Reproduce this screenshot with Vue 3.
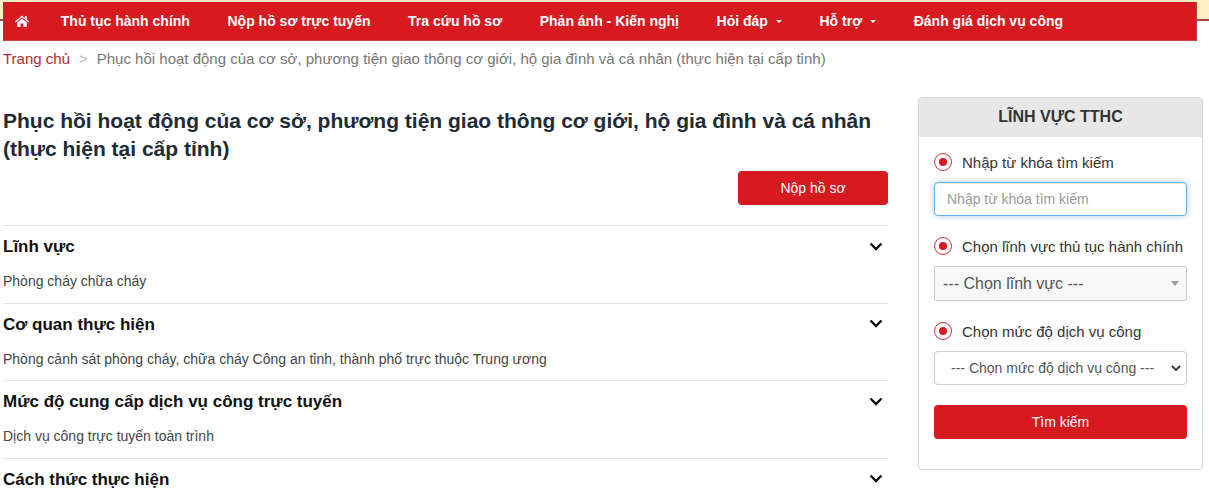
<script setup>
const menu = [
  { label: 'Thủ tục hành chính' },
  { label: 'Nộp hồ sơ trực tuyến' },
  { label: 'Tra cứu hồ sơ' },
  { label: 'Phản ánh - Kiến nghị' },
  { label: 'Hỏi đáp', caret: true },
  { label: 'Hỗ trợ', caret: true },
  { label: 'Đánh giá dịch vụ công' }
]
const title = 'Phục hồi hoạt động của cơ sở, phương tiện giao thông cơ giới, hộ gia đình và cá nhân (thực hiện tại cấp tỉnh)'
const sections = [
  { name: 'Lĩnh vực', text: 'Phòng cháy chữa cháy' },
  { name: 'Cơ quan thực hiện', text: 'Phòng cảnh sát phòng cháy, chữa cháy Công an tỉnh, thành phố trực thuộc Trung ương' },
  { name: 'Mức độ cung cấp dịch vụ công trực tuyến', text: 'Dịch vụ công trực tuyến toàn trình' },
  { name: 'Cách thức thực hiện', text: '' }
]
</script>

<template>
  <div class="page">
    <header class="header">
      <nav class="nav">
        <a class="nav-item home">
          <svg width="14" height="12" viewBox="0 0 14 12"><path fill="#fff" d="M7 0.6 0 6.6l.8.9L7 2.3l6.2 5.2.8-.9-2.3-2V1h-1.8v1.9zM2.2 7.6V12h3.4V8.6h2.8V12h3.4V7.6L7 3.6z"/></svg>
        </a>
        <a v-for="m in menu" :key="m.label" class="nav-item">
          {{ m.label }}<i v-if="m.caret" class="caret"></i>
        </a>
      </nav>
    </header>
    <div class="crumb">
      <a class="crumb-home">Trang chủ</a>
      <span class="crumb-sep">&gt;</span>
      <span>{{ title }}</span>
    </div>
    <div class="main">
      <div class="content">
        <h1 class="title">{{ title }}</h1>
        <div class="submit-row">
          <button class="btn btn-submit">Nộp hồ sơ</button>
        </div>
        <section v-for="s in sections" :key="s.name" class="section">
          <div class="section-head">
            <h3>{{ s.name }}</h3>
            <svg class="chevron" width="14" height="9" viewBox="0 0 14 9"><path d="M1.5 1.5 7 7l5.5-5.5" fill="none" stroke="#111" stroke-width="2.4"/></svg>
          </div>
          <p v-if="s.text">{{ s.text }}</p>
        </section>
      </div>
      <aside class="side">
        <div class="side-head">LĨNH VỰC TTHC</div>
        <div class="side-body">
          <label class="radio-row"><i class="radio"></i>Nhập từ khóa tìm kiếm</label>
          <input class="field field-focus" placeholder="Nhập từ khóa tìm kiếm" />
          <label class="radio-row"><i class="radio"></i>Chọn lĩnh vực thủ tục hành chính</label>
          <div class="field fake-select">
            <span>--- Chọn lĩnh vực ---</span>
            <i class="select-arrow"></i>
          </div>
          <label class="radio-row"><i class="radio"></i>Chọn mức độ dịch vụ công</label>
          <div class="field level-select">
            <span>--- Chọn mức độ dịch vụ công ---</span>
            <svg width="10" height="7" viewBox="0 0 10 7"><path d="M1 1l4 4 4-4" fill="none" stroke="#333" stroke-width="1.8"/></svg>
          </div>
          <button class="btn btn-search">Tìm kiếm</button>
        </div>
      </aside>
    </div>
  </div>
</template>

<style>
html, body {
  margin: 0;
  background: #fff;
}
</style>

<style scoped>
.page {
  width: 1209px;
  height: 492px;
  overflow: hidden;
  font-family: "Liberation Sans", Arial, sans-serif;
  color: #333;
}
.header {
  padding: 2px 12px 0 3px;
  background: linear-gradient(#fdeec4 0, #fdeec4 19px, #a8443c 19px, #a8443c 21px, #fff 21px);
}
.nav {
  display: flex;
  align-items: center;
  height: 39px;
  box-sizing: border-box;
  background: #d71920;
  border-right: 1px solid #b5403f;
  border-bottom: 1px solid #c9453f;
}
.nav-item {
  display: flex;
  align-items: center;
  color: #fff;
  font-size: 14px;
  font-weight: bold;
  padding: 0 18.8px;
  white-space: nowrap;
}
.home {
  padding: 0 13px 0 12px;
}
.caret {
  width: 0;
  height: 0;
  margin-left: 8px;
  border-left: 3.5px solid transparent;
  border-right: 3.5px solid transparent;
  border-top: 3.5px solid #fff;
}
.crumb {
  display: flex;
  align-items: center;
  height: 35px;
  padding-left: 3px;
  font-size: 15px;
  color: #777;
}
.crumb-home {
  color: #b52a34;
}
.crumb-sep {
  margin: 0 9px;
  color: #bbb;
}
.main {
  display: flex;
  align-items: flex-start;
  padding: 21px 0 0 3px;
}
.content {
  width: 885px;
}
.title {
  margin: 0;
  padding-top: 10px;
  font-size: 21px;
  line-height: 28px;
  font-weight: bold;
  color: #212b36;
}
.submit-row {
  display: flex;
  justify-content: flex-end;
  margin-top: 8px;
  padding-bottom: 20px;
}
.btn {
  display: block;
  height: 34px;
  border: 0;
  border-radius: 4px;
  background: #d71920;
  color: #fff;
  font-family: inherit;
  font-size: 14px;
}
.btn-submit {
  width: 150px;
}
.section {
  border-top: 1px solid #e4e4e4;
  height: 77.5px;
  box-sizing: border-box;
}
.section-head {
  display: flex;
  justify-content: space-between;
  align-items: center;
  padding: 11px 5px 0 0;
}
.section-head h3 {
  margin: 0;
  font-size: 17px;
  line-height: 20px;
  font-weight: bold;
  color: #111;
}
.chevron {
  margin-top: -2px;
}
.section p {
  margin: 15px 0 0;
  font-size: 14px;
  line-height: 18px;
  color: #444;
}
.side {
  width: 285px;
  margin-left: 30px;
  border: 1px solid #d5d5d5;
  border-radius: 4px;
  box-sizing: border-box;
  height: 373px;
}
.side-head {
  height: 39px;
  line-height: 38px;
  background: #e7e7e7;
  text-align: center;
  font-size: 16px;
  font-weight: bold;
  color: #333;
}
.side-body {
  padding: 15px 15px 0;
}
.radio-row {
  display: flex;
  align-items: center;
  gap: 10px;
  height: 20px;
  font-size: 15px;
  color: #333;
}
.radio {
  position: relative;
  display: block;
  width: 18px;
  height: 18px;
  border: 1px solid #c8303a;
  border-radius: 50%;
  box-sizing: border-box;
  flex: none;
}
.radio::after {
  content: "";
  position: absolute;
  left: 4px;
  top: 4px;
  width: 8px;
  height: 8px;
  border-radius: 50%;
  background: #d71920;
}
.field {
  display: flex;
  align-items: center;
  width: 253px;
  height: 34px;
  box-sizing: border-box;
  margin: 10px 0 20px;
  border: 1px solid #ccc;
  border-radius: 4px;
  font-family: inherit;
  font-size: 14px;
  color: #555;
}
input.field {
  padding: 0 12px;
  outline: 0;
}
input.field::placeholder {
  color: #999;
}
.field-focus {
  border-color: #66afe9;
  box-shadow: inset 0 1px 1px rgba(0, 0, 0, .075), 0 0 6px rgba(102, 175, 233, .6);
}
.fake-select {
  justify-content: space-between;
  height: 35px;
  padding: 0 7px 0 8px;
  background: #f8f8f8;
  font-size: 16px;
  border-radius: 2px;
}
.select-arrow {
  width: 0;
  height: 0;
  border-left: 4px solid transparent;
  border-right: 4px solid transparent;
  border-top: 5px solid #999;
}
.level-select {
  justify-content: space-between;
  padding: 0 5px 0 16px;
}
.btn-search {
  width: 253px;
}
</style>
